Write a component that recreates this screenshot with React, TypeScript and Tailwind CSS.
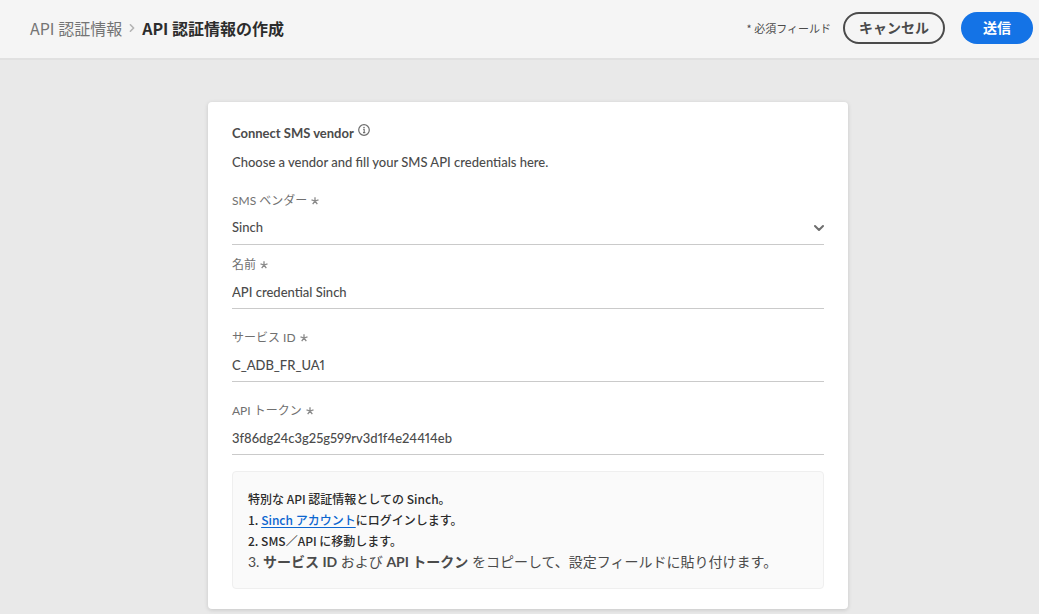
import { useState } from "react";

function Chevron({ className, direction }: { className: string; direction: "right" | "down" }) {
  return (
    <svg
      aria-hidden="true"
      className={className}
      viewBox="0 0 10 10"
      fill="none"
      stroke="currentColor"
      strokeWidth="2"
      strokeLinecap="round"
      strokeLinejoin="round"
    >
      <path d={direction === "right" ? "M3 1l4 4-4 4" : "M1 4l4 4 4-4"} />
    </svg>
  );
}

function Required() {
  return (
    <svg aria-hidden="true" className="size-2 text-[#8a8a8a]" viewBox="0 0 8 8" stroke="currentColor" strokeWidth="1.3">
      <path d="M4 4V.3M4 4l3.5-1.1M4 4l2.3 3.1M4 4L1.700 7.100M4 4L.5 2.900" />
    </svg>
  );
}

function FieldLabel({ id, children }: { id: string; children: string }) {
  return (
    <label htmlFor={id} className="flex h-4 items-center gap-1 text-xs leading-4 text-[#707070]">
      {children}
      <Required />
    </label>
  );
}

const control =
  "h-9 w-full appearance-none border-b border-[#cacaca] bg-transparent pt-0.5 text-[13px] font-medium text-[#4b4b4b] proportional-nums outline-none focus:border-[#1473e6]";

function TextField({ id, label, initial }: { id: string; label: string; initial: string }) {
  const [value, setValue] = useState(initial);
  return (
    <div>
      <FieldLabel id={id}>{label}</FieldLabel>
      <input id={id} required value={value} onChange={(e) => setValue(e.target.value)} className={control} />
    </div>
  );
}

export default function App() {
  return (
    <div className="min-h-screen bg-[#e9e9e9] font-['Lato','Noto_Sans_CJK_JP',sans-serif] text-[#4b4b4b]">
      <header className="flex h-[60px] items-center justify-between border-b-2 border-[#e1e1e1] bg-[#f5f5f5] pr-1.5 pb-0.5 pl-[30px] font-['Noto_Sans_CJK_JP',sans-serif]">
        <nav className="flex items-center gap-1.5 text-base">
          <a href="#credentials" className="text-[#747474]">
            API 認証情報
          </a>
          <Chevron direction="right" className="size-2 text-[#b3b3b3]" />
          <h1 className="font-bold text-[#2c2c2c]">API 認証情報の作成</h1>
        </nav>
        <div className="flex items-center">
          <span className="mr-3 text-[11px]">* 必須フィールド</span>
          <button
            type="button"
            className="mr-4 h-8 w-[102px] rounded-full border-2 border-[#4b4b4b] pb-0.5 text-sm leading-5 font-bold"
          >
            キャンセル
          </button>
          <button
            type="submit"
            form="credential-form"
            className="h-8 w-[72px] rounded-full bg-[#1473e6] pb-0.5 text-sm leading-5 font-bold text-white"
          >
            送信
          </button>
        </div>
      </header>

      <main className="pt-[42px] pb-[5px] pl-[17px]">
        <form
          id="credential-form"
          onSubmit={(e) => e.preventDefault()}
          className="mx-auto max-w-[640px] rounded bg-white px-6 py-5 shadow-[0_1px_4px_rgba(0,0,0,0.15)]"
        >
          <div className="flex items-start gap-1">
            <h2 className="text-[13px] leading-[22px] font-bold">Connect SMS vendor</h2>
            <svg aria-hidden="true" className="mt-0.5 size-3 text-[#6e6e6e]" viewBox="0 0 12 12" fill="none" stroke="currentColor">
              <circle cx="6" cy="6" r="5.300" strokeWidth="1.2" />
              <path d="M5.200 5.400H6.200V8.500M5 8.600h2.300" strokeWidth="1.100" />
              <circle cx="6" cy="3.500" r=".8" fill="currentColor" stroke="none" />
            </svg>
          </div>
          <p className="mt-2 text-[13px] leading-5 font-medium">Choose a vendor and fill your SMS API credentials here.</p>

          <div className="mt-[21px] flex flex-col gap-[21px]">
            <div className="flex flex-col gap-3">
              <div>
                <FieldLabel id="vendor">SMS ベンダー</FieldLabel>
                <div className="grid items-center">
                  <select id="vendor" required defaultValue="Sinch" className={`${control} col-start-1 row-start-1`}>
                    <option>Sinch</option>
                  </select>
                  <Chevron
                    direction="down"
                    className="pointer-events-none col-start-1 row-start-1 size-2.5 justify-self-end text-[#6e6e6e]"
                  />
                </div>
              </div>
              <TextField id="name" label="名前" initial="API credential Sinch" />
            </div>
            <TextField id="service-id" label="サービス ID" initial="C_ADB_FR_UA1" />
            <TextField id="api-token" label="API トークン" initial="3f86dg24c3g25g599rv3d1f4e24414eb" />
          </div>

          <section className="mt-4 rounded border border-[#efefef] bg-[#fafafa] px-[15px] py-4 font-['Noto_Sans_CJK_JP',sans-serif]">
            <p className="text-xs leading-[21px] font-medium text-[#2c2c2c]">特別な API 認証情報としての Sinch。</p>
            <ol className="text-xs leading-[21px] font-medium text-[#2c2c2c]">
              <li>
                1.{" "}
                <a href="#sinch" className="text-[#0d66d0] underline underline-offset-2">
                  Sinch アカウント
                </a>
                にログインします。
              </li>
              <li>2. SMS／API に移動します。</li>
              <li className="font-['Lato','Noto_Sans_CJK_JP',sans-serif] text-sm leading-[21px] font-normal text-[#4b4b4b]">
                3. <strong>サービス ID</strong> および <strong>API トークン</strong>{" "}
                をコピーして、設定フィールドに貼り付けます。
              </li>
            </ol>
          </section>
        </form>
      </main>
    </div>
  );
}
